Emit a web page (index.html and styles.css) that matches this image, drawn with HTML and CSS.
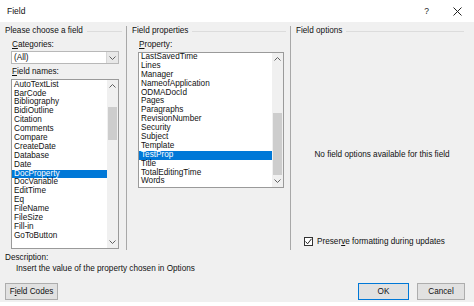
FILE: index.html
```html
<!DOCTYPE html>
<html>
<head>
<meta charset="utf-8">
<link rel="stylesheet" href="styles.css">
</head>
<body>
<div class="titlebar">
  <span class="title">Field</span>
  <span class="help">?</span>
  <svg class="close" width="9" height="9" viewBox="0 0 9 9"><path d="M0.5 0.5L8.5 8.5M8.5 0.5L0.5 8.5" stroke="#222" stroke-width="1" fill="none"/></svg>
</div>
<div class="main">
  <div class="cols">
    <section class="col col1">
      <div class="group"><span>Please choose a field</span><i class="rule"></i></div>
      <div class="label"><u>C</u>ategories:</div>
      <div class="combo">
        <span class="combo-text">(All)</span>
        <span class="drop"><svg width="7" height="4" viewBox="0 0 7 4"><path d="M0.5 0.5L3.5 3.5L6.5 0.5" stroke="#606060" fill="none"/></svg></span>
      </div>
      <div class="label label-tight"><u>F</u>ield names:</div>
      <div class="list list-fields">
        <ul class="items">
          <li>AutoTextList</li>
          <li>BarCode</li>
          <li>Bibliography</li>
          <li>BidiOutline</li>
          <li>Citation</li>
          <li>Comments</li>
          <li>Compare</li>
          <li>CreateDate</li>
          <li>Database</li>
          <li>Date</li>
          <li class="sel">DocProperty</li>
          <li>DocVariable</li>
          <li>EditTime</li>
          <li>Eq</li>
          <li>FileName</li>
          <li>FileSize</li>
          <li>Fill-in</li>
          <li>GoToButton</li>
        </ul>
        <div class="sb">
          <span class="arrow"><svg width="7" height="4" viewBox="0 0 7 4"><path d="M0.5 3.5L3.5 0.5L6.5 3.5" stroke="#606060" fill="none"/></svg></span>
          <div class="thumb thumb-fields"></div>
          <span class="sb-fill"></span>
          <span class="arrow"><svg width="7" height="4" viewBox="0 0 7 4"><path d="M0.5 0.5L3.5 3.5L6.5 0.5" stroke="#606060" fill="none"/></svg></span>
        </div>
      </div>
    </section>
    <section class="col col2">
      <div class="group"><span>Field properties</span><i class="rule"></i></div>
      <div class="label"><u>P</u>roperty:</div>
      <div class="list list-props">
        <ul class="items">
          <li>LastSavedTime</li>
          <li>Lines</li>
          <li>Manager</li>
          <li>NameofApplication</li>
          <li>ODMADocId</li>
          <li>Pages</li>
          <li>Paragraphs</li>
          <li>RevisionNumber</li>
          <li>Security</li>
          <li>Subject</li>
          <li>Template</li>
          <li class="sel">TestProp</li>
          <li>Title</li>
          <li>TotalEditingTime</li>
          <li>Words</li>
        </ul>
        <div class="sb">
          <span class="arrow"><svg width="7" height="4" viewBox="0 0 7 4"><path d="M0.5 3.5L3.5 0.5L6.5 3.5" stroke="#606060" fill="none"/></svg></span>
          <div class="thumb thumb-props"></div>
          <span class="sb-fill"></span>
          <span class="arrow"><svg width="7" height="4" viewBox="0 0 7 4"><path d="M0.5 0.5L3.5 3.5L6.5 0.5" stroke="#606060" fill="none"/></svg></span>
        </div>
      </div>
    </section>
    <section class="col col3">
      <div class="group"><span>Field options</span><i class="rule"></i></div>
      <div class="noopts">No field options available for this field</div>
      <div class="check-row">
        <span class="checkbox"><svg width="7" height="7" viewBox="0 0 7 7"><path d="M0.5 3.5L2.6 5.8L6.5 0.8" stroke="#222" stroke-width="1" fill="none"/></svg></span>
        <span>Preser<u>v</u>e formatting during updates</span>
      </div>
    </section>
  </div>
  <div class="desc">
    <div class="desc-label">Description:</div>
    <div class="desc-text">Insert the value of the property chosen in Options</div>
  </div>
  <div class="buttons">
    <span class="btn btn-codes">F<u>i</u>eld Codes</span>
    <span class="spacer"></span>
    <span class="btn btn-ok">OK</span>
    <span class="btn btn-cancel">Cancel</span>
  </div>
</div>
</body>
</html>
```

FILE: styles.css
```css
html, body {
  margin: 0;
  padding: 0;
}
body {
  width: 474px;
  height: 306px;
  overflow: hidden;
  background: #ffffff;
  font-family: "Liberation Sans", Arial, sans-serif;
  font-size: 8.2px;
  color: #111;
}
u {
  text-decoration: underline;
  text-underline-offset: 1px;
}
.titlebar {
  height: 22px;
  display: flex;
  align-items: center;
  padding-left: 7px;
  padding-right: 12px;
  background: #fff;
  font-size: 8.5px;
}
.title {
  flex: 1;
}
.help {
  margin-right: 24px;
  color: #222;
}
.close {
  display: block;
}
.main {
  background: #f0f0f0;
  height: 280px;
  display: flex;
  flex-direction: column;
}
.cols {
  display: flex;
  height: 224px;
  margin-top: 4px;
}
.col {
  display: flex;
  flex-direction: column;
  box-sizing: border-box;
}
.col1 {
  width: 127px;
  padding-left: 5px;
  border-right: 1px solid #a8a8a8;
}
.col2 {
  width: 164px;
  padding-left: 5px;
  border-right: 1px solid #a8a8a8;
}
.col3 {
  flex: 1;
  padding-left: 5px;
  padding-right: 6px;
}
.group {
  height: 10px;
  line-height: 10px;
  display: flex;
  align-items: center;
  gap: 4px;
  padding-right: 4px;
}
.rule {
  flex: 1;
  height: 1px;
  background: #dcdcdc;
}
.label {
  height: 10px;
  line-height: 10px;
  margin-top: 4px;
  margin-left: 7px;
}
.label-tight {
  margin-top: 3px;
}
.combo {
  margin-top: 1px;
  margin-left: 6px;
  width: 108px;
  height: 13px;
  box-sizing: border-box;
  border: 1px solid #b8b8b8;
  background: #fff;
  display: flex;
  align-items: stretch;
}
.combo-text {
  flex: 1;
  padding-left: 2px;
  line-height: 11px;
}
.drop {
  width: 11px;
  background: #e8e8e8;
  border-left: 1px solid #d6d6d6;
  display: flex;
  align-items: center;
  justify-content: center;
}
.list {
  margin-top: 2px;
  margin-left: 6px;
  box-sizing: border-box;
  border: 1px solid #9a9a9a;
  background: #fff;
  display: flex;
}
.list-fields {
  width: 108px;
  height: 170px;
}
.list-props {
  width: 146px;
  height: 136px;
}
.items {
  list-style: none;
  margin: 0;
  padding: 0;
  flex: 1;
  overflow: hidden;
}
.list-fields .items {
  padding-top: 0.7px;
}
.items li {
  height: 8.9px;
  line-height: 8.9px;
  padding-left: 2px;
  white-space: nowrap;
}
.items li.sel {
  background: #0078d7;
  color: #fff;
}
.sb {
  width: 11px;
  background: #f0f0f0;
  display: flex;
  flex-direction: column;
  align-items: center;
}
.arrow {
  height: 12px;
  display: flex;
  align-items: center;
  justify-content: center;
}
.thumb {
  width: 9px;
  background: #cdcdcd;
}
.thumb-fields {
  margin-top: 15px;
  height: 33px;
}
.thumb-props {
  margin-top: 48px;
  height: 63px;
}
.sb-fill {
  flex: 1;
}
.noopts {
  margin-top: 114px;
  height: 10px;
  line-height: 10px;
  text-align: center;
}
.check-row {
  margin-top: auto;
  margin-bottom: 4px;
  margin-left: 8px;
  height: 10px;
  display: flex;
  align-items: center;
  gap: 4px;
}
.checkbox {
  width: 9px;
  height: 9px;
  box-sizing: border-box;
  border: 1px solid #333;
  background: #fff;
  display: flex;
  align-items: center;
  justify-content: center;
}
.checkbox svg {
  display: block;
}
.desc {
  margin-top: 3px;
  padding-left: 5px;
}
.desc-label {
  height: 10px;
  line-height: 10px;
}
.desc-text {
  height: 11px;
  line-height: 11px;
  padding-left: 11px;
}
.buttons {
  margin-top: 9px;
  display: flex;
  padding-left: 5px;
  padding-right: 9px;
}
.spacer {
  flex: 1;
}
.btn {
  height: 17px;
  box-sizing: border-box;
  border: 1px solid #adadad;
  background: #e1e1e1;
  display: flex;
  align-items: center;
  justify-content: center;
}
.btn-codes {
  width: 53px;
}
.btn-ok {
  width: 51px;
  border-color: #0078d7;
}
.btn-cancel {
  width: 48px;
  margin-left: 8px;
}
```
